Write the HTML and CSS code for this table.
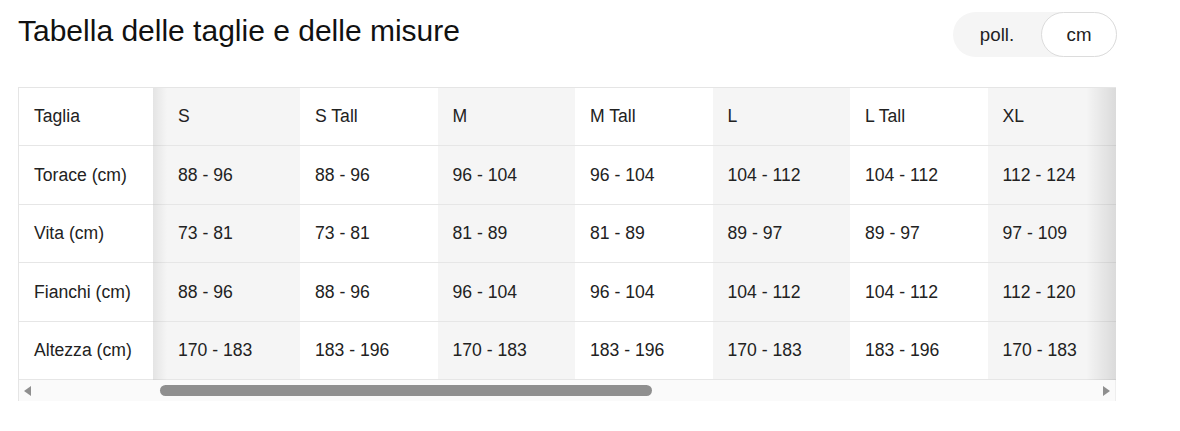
FILE: index.html
```html
<!DOCTYPE html>
<html lang="it">
<head>
<meta charset="utf-8">
<title>Tabella delle taglie e delle misure</title>
<link rel="stylesheet" href="styles.css">
</head>
<body>
<div class="page">
  <header class="top">
    <h1 class="title">Tabella delle taglie e delle misure</h1>
    <div class="units">
      <button class="unit unit-in">poll.</button>
      <button class="unit unit-cm">cm</button>
    </div>
  </header>

  <div class="chart">
    <div class="grid">
      <div class="cell label">Taglia</div>
      <div class="cell alt first-data">S</div>
      <div class="cell">S Tall</div>
      <div class="cell alt">M</div>
      <div class="cell">M Tall</div>
      <div class="cell alt">L</div>
      <div class="cell">L Tall</div>
      <div class="cell alt">XL</div>

      <div class="cell label">Torace (cm)</div>
      <div class="cell alt first-data">88 - 96</div>
      <div class="cell">88 - 96</div>
      <div class="cell alt">96 - 104</div>
      <div class="cell">96 - 104</div>
      <div class="cell alt">104 - 112</div>
      <div class="cell">104 - 112</div>
      <div class="cell alt">112 - 124</div>

      <div class="cell label">Vita (cm)</div>
      <div class="cell alt first-data">73 - 81</div>
      <div class="cell">73 - 81</div>
      <div class="cell alt">81 - 89</div>
      <div class="cell">81 - 89</div>
      <div class="cell alt">89 - 97</div>
      <div class="cell">89 - 97</div>
      <div class="cell alt">97 - 109</div>

      <div class="cell label">Fianchi (cm)</div>
      <div class="cell alt first-data">88 - 96</div>
      <div class="cell">88 - 96</div>
      <div class="cell alt">96 - 104</div>
      <div class="cell">96 - 104</div>
      <div class="cell alt">104 - 112</div>
      <div class="cell">104 - 112</div>
      <div class="cell alt">112 - 120</div>

      <div class="cell label">Altezza (cm)</div>
      <div class="cell alt first-data">170 - 183</div>
      <div class="cell">183 - 196</div>
      <div class="cell alt">170 - 183</div>
      <div class="cell">183 - 196</div>
      <div class="cell alt">170 - 183</div>
      <div class="cell">183 - 196</div>
      <div class="cell alt">170 - 183</div>
    </div>
    <div class="shade-left"></div>
    <div class="shade-right"></div>
    <div class="scroll">
      <div class="arrow arrow-left"></div>
      <div class="track"><div class="thumb"></div></div>
      <div class="arrow arrow-right"></div>
    </div>
  </div>
</div>
</body>
</html>
```

FILE: styles.css
```css
* {
  box-sizing: border-box;
  margin: 0;
  padding: 0;
}

body {
  background: #fff;
  font-family: "Liberation Sans", Arial, sans-serif;
  color: #222;
}

.page {
  width: 1099px;
  margin-left: 18px;
}

.top {
  display: flex;
  justify-content: space-between;
  align-items: flex-start;
  padding-top: 12px;
}

.title {
  font-size: 30px;
  font-weight: 400;
  line-height: 34px;
  margin-top: 2px;
  color: #111;
}

.units {
  display: flex;
  width: 164px;
  height: 45px;
  background: #f5f5f5;
  border-radius: 23px;
}

.unit {
  font-family: "Liberation Sans", Arial, sans-serif;
  font-size: 18.7px;
  color: #222;
  background: none;
  border: 1px solid transparent;
  border-radius: 23px;
  height: 45px;
}

.unit-in {
  width: 88px;
}

.unit-cm {
  width: 76px;
  background: #fff;
  border-color: #dcdcdc;
}

.chart {
  position: relative;
  width: 1098px;
  margin-top: 30px;
  border-top: 1px solid #e5e5e5;
  border-left: 1px solid #e5e5e5;
}

.grid {
  display: grid;
  grid-template-columns: 134px 147px repeat(5, 137.5px) 1fr;
  grid-template-rows: 58px 59px 58px 59px 58px;
}

.cell {
  display: flex;
  align-items: center;
  padding-left: 15px;
  border-bottom: 1px solid #e6e6e6;
  font-size: 17.6px;
  white-space: nowrap;
  overflow: hidden;
}

.alt {
  background: #f5f5f5;
}

.first-data {
  padding-left: 25px;
}

.shade-left {
  position: absolute;
  left: 134px;
  top: 0;
  width: 14px;
  height: 292px;
  background: linear-gradient(to right, rgba(0, 0, 0, 0.07), rgba(0, 0, 0, 0));
}

.shade-right {
  position: absolute;
  right: 0;
  top: 0;
  width: 30px;
  height: 292px;
  background: linear-gradient(to right, rgba(0, 0, 0, 0), rgba(0, 0, 0, 0.11));
}

.scroll {
  display: flex;
  align-items: center;
  height: 21px;
  background: #fafafa;
  border-right: 1px solid #eeeeee;
}

.arrow {
  width: 17px;
  height: 21px;
  display: flex;
  align-items: center;
  justify-content: center;
}

.arrow-left::before {
  content: "";
  border-top: 5px solid transparent;
  border-bottom: 5px solid transparent;
  border-right: 7px solid #8f8f8f;
}

.arrow-right::before {
  content: "";
  border-top: 5px solid transparent;
  border-bottom: 5px solid transparent;
  border-left: 7px solid #8f8f8f;
}

.track {
  flex: 1;
  height: 100%;
  display: flex;
  align-items: center;
}

.thumb {
  margin-left: 124px;
  width: 492px;
  height: 11px;
  border-radius: 6px;
  background: #8f8f8f;
}
```
